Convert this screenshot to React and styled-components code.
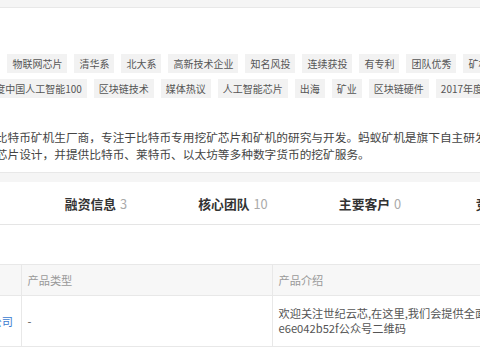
import React from 'react'
import styled, { createGlobalStyle } from 'styled-components'

const GlobalStyle = createGlobalStyle`
  body {
    margin: 0;
    overflow: hidden;
    background: #fff;
    font-family: "Noto Sans CJK SC", "Liberation Sans", sans-serif;
  }
`

const TopBand = styled.div`
  height: 7px;
  background: #f5f5f5;
  border-bottom: 1px solid #e8e8e8;
`

// the page is wider than the window and sits a bit left of it
const Page = styled.div`
  margin-left: -110px;
  width: 1100px;
`

const InfoCard = styled.section`
  padding: 46px 0 10px 68px;
`

const TagList = styled.ul`
  display: flex;
  flex-wrap: wrap;
  gap: 6px 7px;
  margin: 0;
  padding: 0;
  list-style: none;
  width: 600px;
`

const Tag = styled.li`
  height: 19px;
  line-height: 19px;
  padding: 0 5px;
  font-size: 10px;
  color: #555;
  background: #f2f2f2;
  white-space: nowrap;
`

const Desc = styled.p`
  margin: 30px 0 0 -9px;
  font-size: 11.7px;
  line-height: 17px;
  color: #444;
  white-space: nowrap;
  span {
    display: block;
  }
`

const GapBand = styled.div`
  height: 9px;
  background: #f5f5f5;
  border-top: 1px solid #e8e8e8;
`

const TabBar = styled.nav`
  display: flex;
  height: 42px;
  border-bottom: 1px solid #e5e5e5;
  padding-left: 0.5px;
`

const TabItem = styled.div`
  width: 137px;
  display: flex;
  align-items: center;
  justify-content: center;
  font-size: 12.8px;
  font-weight: bold;
  color: ${p => (p.$active ? '#2d6fd2' : '#333')};
  white-space: nowrap;
  b {
    font-weight: normal;
    color: #aaa;
    margin-left: 4px;
  }
`

const TableWrap = styled.div`
  margin-top: 39px;
  padding-left: 3px;
`

const Table = styled.table`
  border-collapse: collapse;
  font-size: 11.2px;
  table-layout: fixed;
  width: 900px;
`

const Th = styled.th`
  height: 30px;
  padding: 0 6px;
  text-align: left;
  font-weight: normal;
  color: #999;
  background: #f7f7f7;
  border-top: 1px solid #e8e8e8;
  border-bottom: 1px solid #e8e8e8;
  border-left: ${p => (p.$first ? 'none' : '1px solid #e8e8e8')};
  white-space: nowrap;
`

const Td = styled.td`
  height: 50px;
  padding: 0 6px;
  color: #555;
  line-height: 15px;
  border-bottom: 1px solid #e8e8e8;
  border-left: ${p => (p.$first ? 'none' : '1px solid #e8e8e8')};
  white-space: nowrap;
  overflow: hidden;
`

const NameLink = styled.a`
  color: #3b7bd0;
  text-decoration: none;
  padding-left: 2px;
`

const tagsRow = [
  '5G芯片', '物联网芯片', '清华系', '北大系', '高新技术企业', '知名风投',
  '连续获投', '有专利', '团队优秀', '矿机龙头',
  '2018年度中国人工智能100', '区块链技术', '媒体热议', '人工智能芯片',
  '出海', '矿业', '区块链硬件', '2017年度独角兽'
]

const tabs = [
  { name: '产品信息', active: true },
  { name: '融资信息', count: 3 },
  { name: '核心团队', count: 10 },
  { name: '主要客户', count: 0 },
  { name: '竞品公司', count: 4 },
]

export default function App() {
  return (
    <>
      <GlobalStyle />
      <TopBand />
      <Page>
        <InfoCard>
          <TagList>
            {tagsRow.map(t => <Tag key={t}>{t}</Tag>)}
          </TagList>
          <Desc>
            <span>全球最大比特币矿机生厂商，专注于比特币专用挖矿芯片和矿机的研究与开发。蚂蚁矿机是旗下自主研发的矿机品牌，</span>
            <span>专用算力芯片设计，并提供比特币、莱特币、以太坊等多种数字货币的挖矿服务。</span>
          </Desc>
        </InfoCard>
        <GapBand />
        <TabBar>
          {tabs.map(t => (
            <TabItem key={t.name} $active={t.active}>
              {t.name}
              {t.count !== undefined && <b>{t.count}</b>}
            </TabItem>
          ))}
        </TabBar>
        <TableWrap>
          <Table>
            <colgroup>
              <col style={{ width: 128 }} />
              <col style={{ width: 251 }} />
              <col />
            </colgroup>
            <thead>
              <tr>
                <Th $first>产品名称</Th>
                <Th>产品类型</Th>
                <Th>产品介绍</Th>
              </tr>
            </thead>
            <tbody>
              <tr>
                <Td $first><NameLink href="#">比特大陆科技有限公司</NameLink></Td>
                <Td>-</Td>
                <Td>
                  欢迎关注世纪云芯,在这里,我们会提供全面的矿机资讯与服务<br />
                  e6e042b52f公众号二维码
                </Td>
              </tr>
            </tbody>
          </Table>
        </TableWrap>
      </Page>
    </>
  )
}
